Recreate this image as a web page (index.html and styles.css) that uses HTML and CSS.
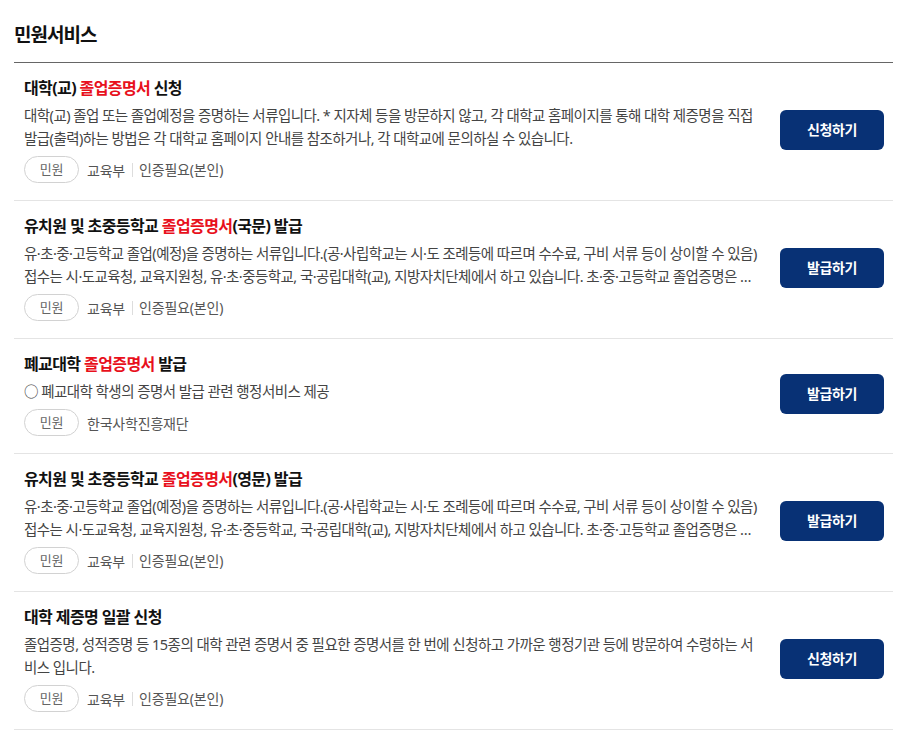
FILE: index.html
```html
<!DOCTYPE html>
<html>
	<head>
		<meta charset="utf-8">
		<title>민원서비스</title>
		<link rel="stylesheet" href="styles.css">
	</head>
	<body>
		<div class="section">
			<h2 class="sec-title">민원서비스</h2>
			<ul class="svc-list">
				<li class="svc-item">
					<div class="svc-body">
						<p class="svc-name">대학(교) <em>졸업증명서</em> 신청</p>
						<p class="svc-desc">대학(교) 졸업 또는 졸업예정을 증명하는 서류입니다. * 지자체 등을 방문하지 않고, 각 대학교 홈페이지를 통해 대학 제증명을 직접 발급(출력)하는 방법은 각 대학교 홈페이지 안내를 참조하거나, 각 대학교에 문의하실 수 있습니다.</p>
						<div class="svc-meta">
							<span class="tag">민원</span>
							<span class="org">교육부</span>
							<span class="auth">인증필요(본인)</span>
						</div>
					</div>
					<a class="btn" href="javascript:;">신청하기</a>
				</li>
				<li class="svc-item">
					<div class="svc-body">
						<p class="svc-name">유치원 및 초중등학교 <em>졸업증명서</em>(국문) 발급</p>
						<p class="svc-desc">
							<span class="line">유·초·중·고등학교 졸업(예정)을 증명하는 서류입니다.(공·사립학교는 시·도 조례등에 따르며 수수료, 구비 서류 등이 상이할 수 있음)</span>
							<span class="line">접수는 시·도교육청, 교육지원청, 유·초·중등학교, 국·공립대학(교), 지방자치단체에서 하고 있습니다. 초·중·고등학교 졸업증명은 …</span>
						</p>
						<div class="svc-meta">
							<span class="tag">민원</span>
							<span class="org">교육부</span>
							<span class="auth">인증필요(본인)</span>
						</div>
					</div>
					<a class="btn" href="javascript:;">발급하기</a>
				</li>
				<li class="svc-item">
					<div class="svc-body">
						<p class="svc-name">폐교대학 <em>졸업증명서</em> 발급</p>
						<p class="svc-desc">○ 폐교대학 학생의 증명서 발급 관련 행정서비스 제공</p>
						<div class="svc-meta">
							<span class="tag">민원</span>
							<span class="org">한국사학진흥재단</span>
						</div>
					</div>
					<a class="btn" href="javascript:;">발급하기</a>
				</li>
				<li class="svc-item">
					<div class="svc-body">
						<p class="svc-name">유치원 및 초중등학교 <em>졸업증명서</em>(영문) 발급</p>
						<p class="svc-desc">
							<span class="line">유·초·중·고등학교 졸업(예정)을 증명하는 서류입니다.(공·사립학교는 시·도 조례등에 따르며 수수료, 구비 서류 등이 상이할 수 있음)</span>
							<span class="line">접수는 시·도교육청, 교육지원청, 유·초·중등학교, 국·공립대학(교), 지방자치단체에서 하고 있습니다. 초·중·고등학교 졸업증명은 …</span>
						</p>
						<div class="svc-meta">
							<span class="tag">민원</span>
							<span class="org">교육부</span>
							<span class="auth">인증필요(본인)</span>
						</div>
					</div>
					<a class="btn" href="javascript:;">발급하기</a>
				</li>
				<li class="svc-item">
					<div class="svc-body">
						<p class="svc-name">대학 제증명 일괄 신청</p>
						<p class="svc-desc">졸업증명, 성적증명 등 15종의 대학 관련 증명서 중 필요한 증명서를 한 번에 신청하고 가까운 행정기관 등에 방문하여 수령하는 서비스 입니다.</p>
						<div class="svc-meta">
							<span class="tag">민원</span>
							<span class="org">교육부</span>
							<span class="auth">인증필요(본인)</span>
						</div>
					</div>
					<a class="btn" href="javascript:;">신청하기</a>
				</li>
			</ul>
		</div>
	</body>
</html>
```

FILE: styles.css
```css
*{
	margin: 0;
	padding: 0;
	box-sizing: border-box;
}

body{
	/* 영문, 기호는 Noto Sans / 한글은 CJK */
	font-family: "Noto Sans", "Noto Sans CJK KR", sans-serif;
	color: #111;
	background-color: #fff;
}

/* 전체 영역 */
.section{
	margin: 0 15px 0 14px;
	padding-top: 21px;
}

.sec-title{
	font-size: 19px;
	line-height: 28px;
	font-weight: 700;
	letter-spacing: -1px;
	padding-bottom: 13px;
	border-bottom: 1px solid #666;
}

.svc-list{
	list-style: none;
}

/* 서비스 한 줄 */
.svc-item{
	display: flex;
	align-items: center;
	gap: 22px;
	padding: 13px 9px 17px 10px;
	border-bottom: 1px solid #e4e4e4;
}

.svc-body{
	flex: 1;
	min-width: 0;
}

.svc-name{
	font-size: 16px;
	line-height: 24px;
	font-weight: 700;
	letter-spacing: -0.6px;
}

.svc-name em{
	font-style: normal;
	color: #e8101c;
}

.svc-desc{
	margin-top: 4px;
	font-size: 14.5px;
	line-height: 23px;
	letter-spacing: -0.55px;
	color: #444;
}

/* 두 줄로 나눈 설명 */
.svc-desc .line{
	display: block;
	white-space: nowrap;
}

.svc-meta{
	display: flex;
	align-items: center;
	margin-top: 6px;
	font-size: 14px;
	letter-spacing: -0.2px;
	color: #555;
}

.tag{
	width: 55px;
	height: 27px;
	line-height: 25px;
	text-align: center;
	border: 1px solid #d2d2d2;
	border-radius: 14px;
	margin-right: 8px;
	color: #666;
	font-size: 13px;
}

.auth{
	margin-left: 7px;
	padding-left: 6px;
	border-left: 1px solid #ddd;
	line-height: 14px;
}

.btn{
	flex: none;
	width: 104px;
	height: 40px;
	line-height: 40px;
	text-align: center;
	background-color: #083175;
	color: #fff;
	font-size: 14px;
	font-weight: 700;
	letter-spacing: -0.4px;
	text-decoration: none;
	border-radius: 6px;
}
```
